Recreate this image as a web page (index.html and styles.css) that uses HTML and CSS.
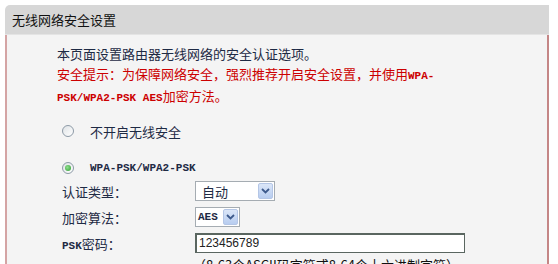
FILE: index.html
```html
<!DOCTYPE html>
<html lang="zh-CN">
<head>
    <meta charset="UTF-8">
    <meta name="viewport" content="width=device-width, initial-scale=1.0">
    <title>无线网络安全设置</title>
    <link rel="stylesheet" href="styles.css">
</head>
<body>
    <div class="panel">
        <div class="panel_header">无线网络安全设置</div>
        <div class="panel_body">
            <p class="intro">本页面设置路由器无线网络的安全认证选项。</p>
            <p class="intro warn">安全提示：为保障网络安全，强烈推荐开启安全设置，并使用<span class="en">WPA-</span><br><span class="en">PSK/WPA2-PSK AES</span>加密方法。</p>

            <div class="radio_row first">
                <span class="radio"></span>
                <span>不开启无线安全</span>
            </div>
            <div class="radio_row">
                <span class="radio checked"></span>
                <span class="en">WPA-PSK/WPA2-PSK</span>
            </div>

            <div class="field first">
                <span class="label">认证类型：</span>
                <div class="select wide">
                    <span class="value">自动</span>
                    <span class="arrow"><svg width="9" height="6" viewBox="0 0 9 6"><path d="M1 1l3.5 3.5L8 1" fill="none" stroke="#3d5a8c" stroke-width="1.8"/></svg></span>
                </div>
            </div>
            <div class="field">
                <span class="label">加密算法：</span>
                <div class="select narrow">
                    <span class="value en">AES</span>
                    <span class="arrow"><svg width="9" height="6" viewBox="0 0 9 6"><path d="M1 1l3.5 3.5L8 1" fill="none" stroke="#3d5a8c" stroke-width="1.8"/></svg></span>
                </div>
            </div>
            <div class="field">
                <span class="label"><span class="en">PSK</span>密码：</span>
                <div class="text_input">123456789</div>
            </div>
            <p class="hint">（8-63个ASCII码字符或8-64个十六进制字符）</p>
        </div>
    </div>
</body>
</html>
```
FILE: styles.css
```css
*{
    padding: 0;
    margin: 0;
    box-sizing: border-box;
}

body{
    background: #fff;
    font-family: "Noto Sans CJK SC", "Liberation Sans", sans-serif;
    font-size: 13px;
    color: #1e2a44;
}

.panel{
    width: 544px;
    margin: 5px 0 0 5px;
}

.panel_header{
    height: 30px;
    line-height: 30px;
    padding-left: 7px;
    background: #d7d7d7;
    border-radius: 5px 0 0 0;
    color: #111;
    border-bottom: 1px solid #e4e4e4;
}

.panel_body{
    height: 229px;
    overflow: hidden;
    background: #f4f4f4;
    border-left: 2px solid #d4a4a4;
    border-right: 2px solid #c48686;
    padding: 9px 0 0 50px;
}

.en{
    font-family: "Liberation Mono", monospace;
    font-size: 11px;
    font-weight: bold;
}

.intro{
    line-height: 20px;
}

.warn{
    color: #cc0000;
}

.radio_row{
    display: flex;
    align-items: center;
    gap: 16px;
    height: 20px;
    margin: 17px 0 0 5px;
}

.radio_row.first{
    margin-top: 13px;
}

.radio{
    width: 12px;
    height: 12px;
    border: 1px solid #8d9aa6;
    border-radius: 50%;
    background: linear-gradient(135deg, #dfe3e6, #fff);
    display: flex;
    align-items: center;
    justify-content: center;
}

.radio.checked::after{
    content: '';
    width: 6px;
    height: 6px;
    border-radius: 50%;
    background: radial-gradient(circle at 40% 40%, #8fe08f, #2f9a2f);
}

.field{
    display: flex;
    align-items: center;
    height: 20px;
    margin: 6px 0 0 5px;
}

.field.first{
    margin-top: 3px;
}

.label{
    width: 133px;
}

.select{
    display: flex;
    align-items: center;
    justify-content: space-between;
    height: 20px;
    background: #fff;
    border: 1px solid #a5acb2;
    padding: 1px 1px 1px 6px;
}

.select.wide{
    width: 80px;
}

.select.narrow{
    width: 45px;
    padding-left: 2px;
}

.select .arrow{
    width: 15px;
    height: 16px;
    display: flex;
    align-items: center;
    justify-content: center;
    background: linear-gradient(#dbe6f8, #b8cdf0);
    border: 1px solid #b4c6e6;
    border-radius: 2px;
}

.text_input{
    width: 270px;
    height: 20px;
    line-height: 17px;
    background: #fff;
    border: 1px solid #5a6660;
    border-top-width: 2px;
    border-left-width: 2px;
    padding-left: 2px;
    font-family: "Liberation Sans", sans-serif;
    font-size: 12px;
    color: #222;
}

.hint{
    margin: 3px 0 0 136px;
    line-height: 18px;
    color: #111;
}
```
